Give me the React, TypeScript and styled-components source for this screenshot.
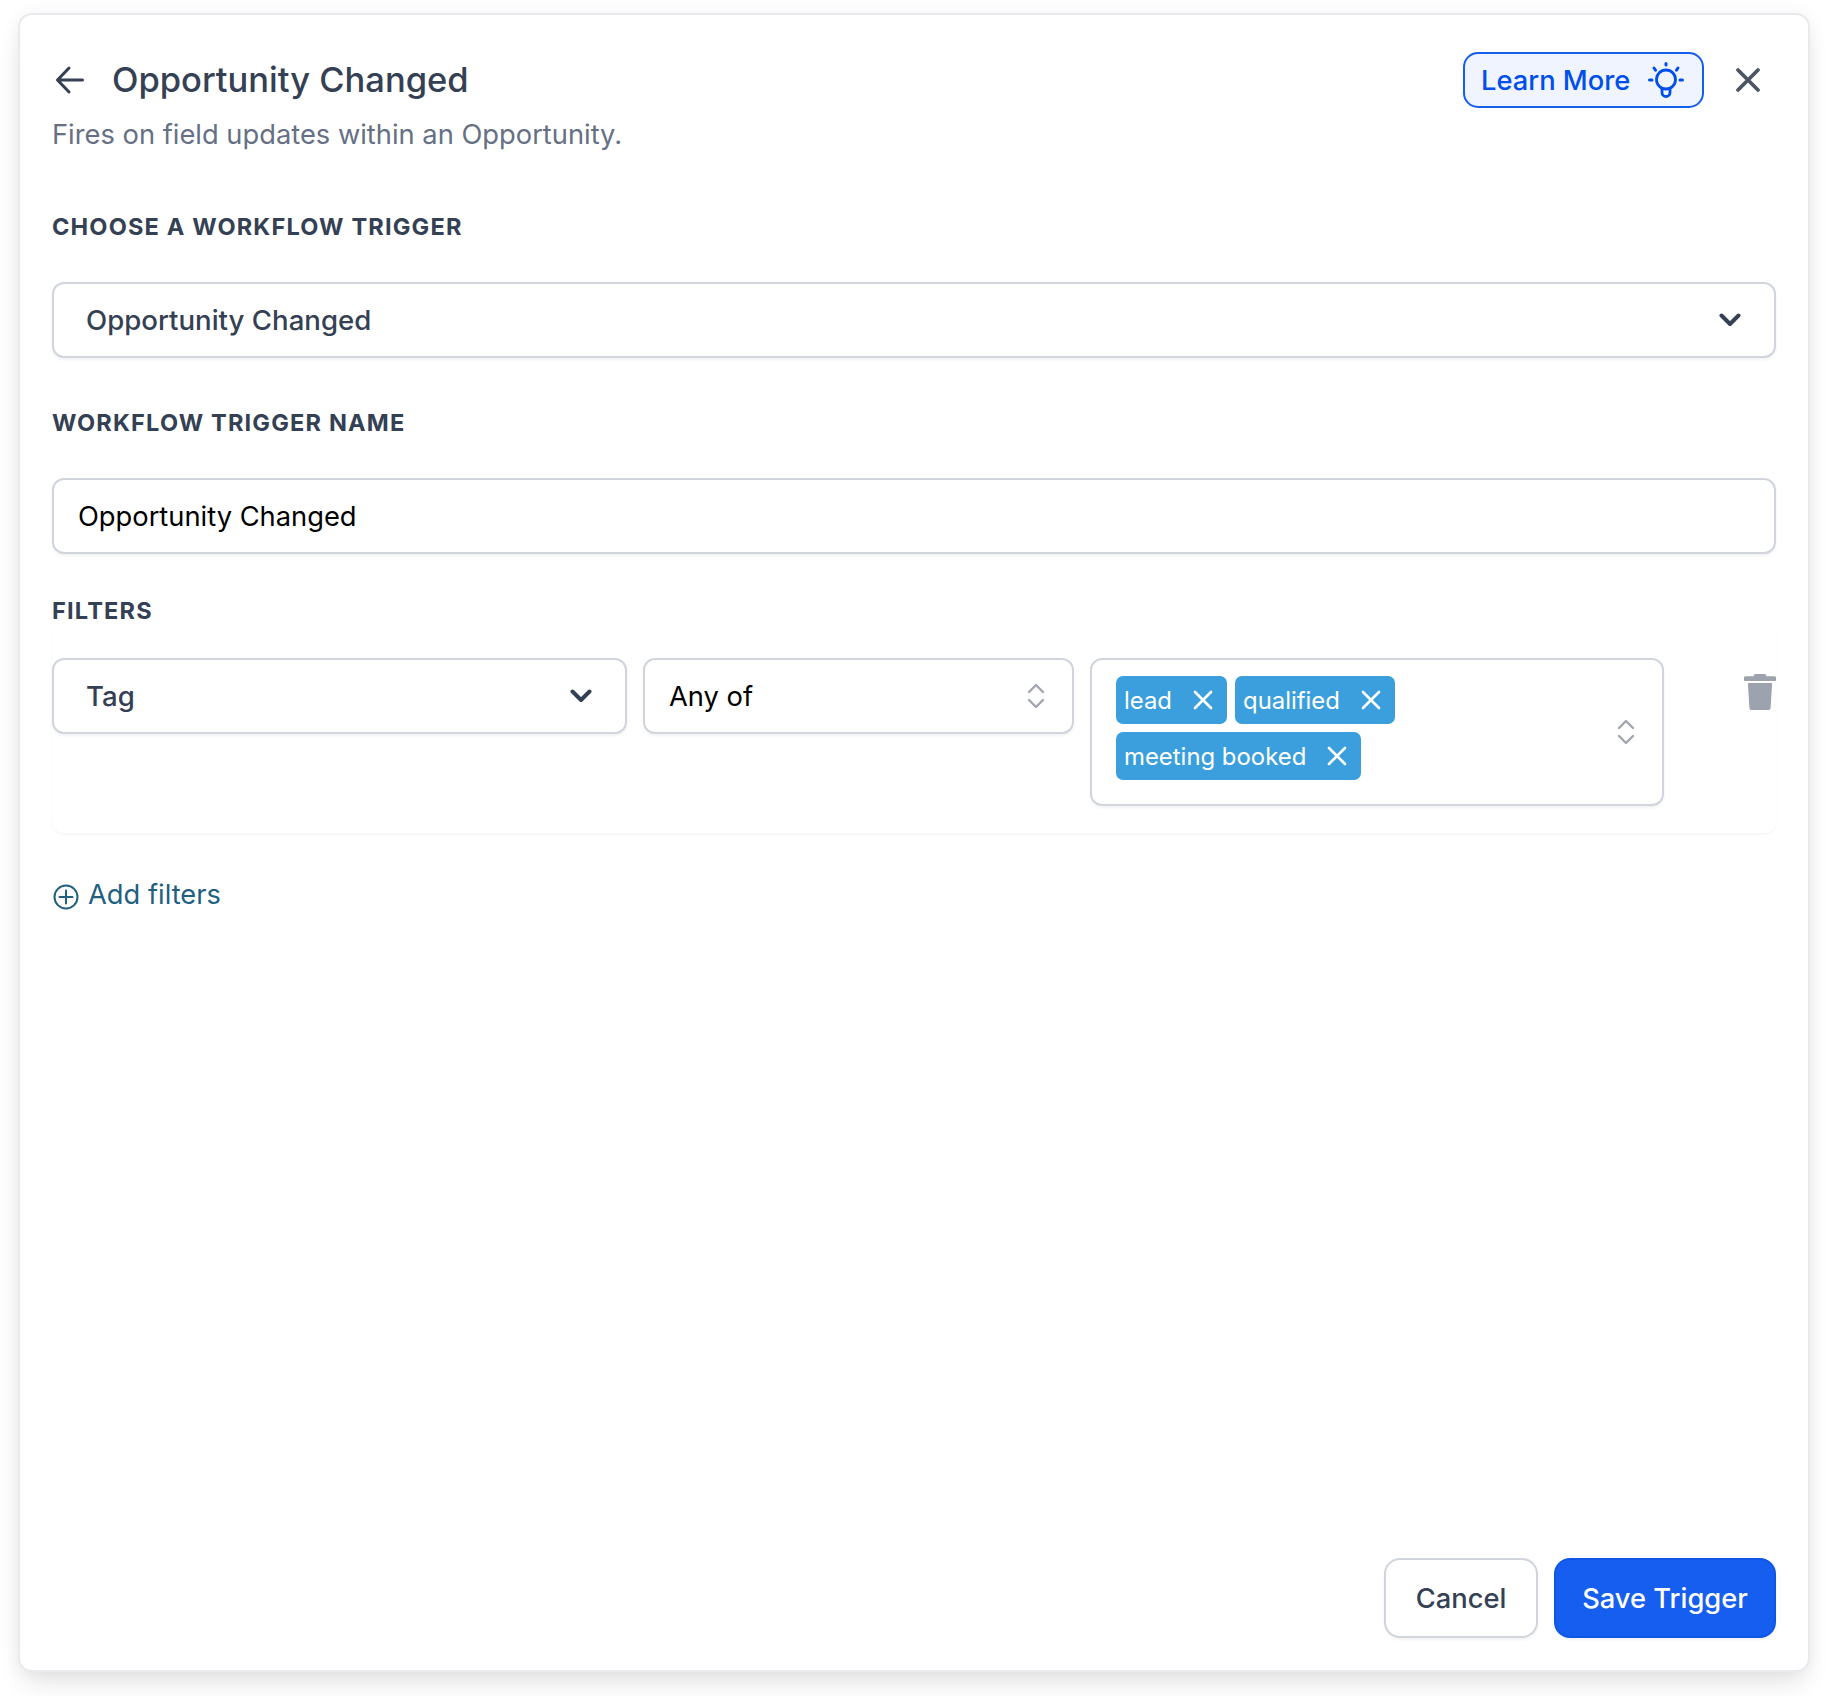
import React from 'react';
import styled, { createGlobalStyle } from 'styled-components';

const GlobalStyle = createGlobalStyle`
  html, body {
    margin: 0;
    padding: 0;
    background: #ffffff;
  }
  * {
    box-sizing: border-box;
  }
`;

const Page = styled.div`
  padding: 13px 0 0 18px;
  height: 1696px;
  font-family: Inter, 'Noto Sans', sans-serif;
  overflow: hidden;
`;

const Card = styled.div`
  width: 1792px;
  height: 1659px;
  border: 2px solid #e9eaed;
  border-radius: 14px;
  background: #ffffff;
  padding: 37px 32px 32px;
  display: flex;
  flex-direction: column;
  box-shadow: 0 16px 26px -5px rgba(0, 0, 0, 0.1), 0 0 18px rgba(0, 0, 0, 0.05);
`;

const Header = styled.div`
  display: flex;
  align-items: center;
  justify-content: space-between;
  height: 56px;
`;

const TitleGroup = styled.div`
  display: flex;
  align-items: center;
`;

const BackIcon = styled.svg`
  width: 30px;
  height: 30px;
  margin: 0 27px 0 3px;
  color: #344054;
`;

const Title = styled.h1`
  margin: 0;
  font-size: 34.5px;
  line-height: 44px;
  font-weight: 500;
  color: #344054;
`;

const Actions = styled.div`
  display: flex;
  align-items: center;
`;

const LearnMore = styled.button`
  display: flex;
  align-items: center;
  justify-content: space-between;
  width: 241px;
  height: 56px;
  padding: 0 18px 0 16px;
  border: 2px solid #155eef;
  border-radius: 15px;
  background: #eff4ff;
  color: #004eeb;
  font-family: inherit;
  font-size: 27.3px;
  font-weight: 500;
`;

const CloseIcon = styled.svg`
  width: 30px;
  height: 30px;
  margin: 0 13px 0 29px;
  color: #4b5563;
`;

const Subtitle = styled.p`
  margin: 7px 0 0;
  font-size: 27.3px;
  line-height: 40px;
  color: #667085;
`;

const Label = styled.div<{ $top: number; $bottom: number }>`
  margin: ${(p) => p.$top}px 0 ${(p) => p.$bottom}px;
  font-size: 23.55px;
  line-height: 30px;
  font-weight: 700;
  letter-spacing: 0.05em;
  color: #344054;
`;

const Field = styled.div<{ $left?: number; $right?: number; $plain?: boolean }>`
  display: flex;
  align-items: center;
  justify-content: space-between;
  height: 76px;
  padding: 0 ${(p) => p.$right ?? 33}px 0 ${(p) => p.$left ?? 32}px;
  border: 2px solid #d0d5dd;
  border-radius: 12px;
  background: #ffffff;
  font-size: ${(p) => (p.$plain ? 27.3 : 27.6)}px;
  font-weight: ${(p) => (p.$plain ? 400 : 500)};
  color: ${(p) => (p.$plain ? '#000000' : '#344054')};
  box-shadow: 0 2px 3px rgba(16, 24, 40, 0.05);
`;

const ChevronIcon = styled.svg`
  width: 22px;
  height: 14px;
  color: #344054;
  flex: none;
`;

const UpDownIcon = styled.svg`
  width: 18px;
  height: 28px;
  color: #a0a5b0;
  flex: none;
`;

const FilterPanel = styled.div`
  padding: 32px 0 27px;
  border-radius: 12px;
  box-shadow: 0 2px 3px rgba(16, 24, 40, 0.04);
`;

const FilterRow = styled.div`
  display: grid;
  grid-template-columns: 575px 431px 574px 1fr;
  column-gap: 16px;
  align-items: start;
`;

const TagsBox = styled.div`
  display: flex;
  align-items: center;
  justify-content: space-between;
  height: 148px;
  padding: 0 27px 0 24px;
  border: 2px solid #d0d5dd;
  border-radius: 12px;
  box-shadow: 0 2px 3px rgba(16, 24, 40, 0.05);
`;

const TagList = styled.div`
  align-self: flex-start;
  display: flex;
  flex-wrap: wrap;
  gap: 8px;
  width: 330px;
  margin-top: 16px;
`;

const TagChip = styled.span`
  display: inline-flex;
  align-items: center;
  height: 48px;
  padding: 0 14px 0 8px;
  border-radius: 7px;
  background: #3b9fdd;
  color: #ffffff;
  font-size: 23.9px;
`;

const TagX = styled.svg`
  width: 20px;
  height: 20px;
  margin-left: 21px;
`;

const TrashIcon = styled.svg`
  justify-self: end;
  width: 32px;
  height: 36px;
  margin-top: 16px;
  color: #9ca3af;
`;

const AddFilters = styled.div`
  display: flex;
  align-items: center;
  gap: 9px;
  margin-top: 44px;
  padding-left: 1px;
  font-size: 27.3px;
  line-height: 36px;
  color: #1f5f7f;
`;

const PlusIcon = styled.svg`
  width: 26px;
  height: 26px;
  margin-top: 4px;
`;

const Footer = styled.div`
  display: flex;
  justify-content: flex-end;
  gap: 16px;
  margin-top: auto;
`;

const FooterButton = styled.button<{ $primary?: boolean }>`
  height: 80px;
  width: ${(p) => (p.$primary ? 222 : 154)}px;
  border: 2px solid ${(p) => (p.$primary ? '#0f56e6' : '#d0d5dd')};
  border-radius: 16px;
  background: ${(p) => (p.$primary ? '#155eef' : '#ffffff')};
  color: ${(p) => (p.$primary ? '#ffffff' : '#344054')};
  font-family: inherit;
  font-size: 27.3px;
  font-weight: 500;
  box-shadow: 0 2px 3px rgba(16, 24, 40, 0.05);
`;

const Chevron = () => (
  <ChevronIcon viewBox="0 0 22 14" fill="none">
    <path d="M2.5 2.5 11 11l8.5-8.5" stroke="currentColor" strokeWidth="4" strokeLinecap="round" strokeLinejoin="round" />
  </ChevronIcon>
);

const UpDown = () => (
  <UpDownIcon viewBox="0 0 18 28" fill="none">
    <path d="M2 10 9 3l7 7M2 18l7 7 7-7" stroke="currentColor" strokeWidth="2.4" strokeLinecap="round" strokeLinejoin="round" />
  </UpDownIcon>
);

const Tag = ({ label }: { label: string }) => (
  <TagChip>
    {label}
    <TagX viewBox="0 0 20 20" fill="none">
      <path d="M2 2l16 16M18 2 2 18" stroke="currentColor" strokeWidth="2.6" strokeLinecap="round" />
    </TagX>
  </TagChip>
);

export default function App() {
  return (
    <>
      <GlobalStyle />
      <Page>
        <Card>
          <Header>
            <TitleGroup>
              <BackIcon viewBox="0 0 30 30" fill="none">
                <path d="M27.5 15H3M14 3 2.5 15 14 27" stroke="currentColor" strokeWidth="3" strokeLinecap="round" strokeLinejoin="round" />
              </BackIcon>
              <Title>Opportunity Changed</Title>
            </TitleGroup>
            <Actions>
              <LearnMore>
                Learn More
                <svg width="36" height="36" viewBox="0 0 36 36" fill="none">
                  <circle cx="18" cy="17.5" r="9.5" stroke="currentColor" strokeWidth="2.8" />
                  <path d="M14 27v3.5a4 4 0 0 0 8 0V27" stroke="currentColor" strokeWidth="2.8" />
                  <path d="M18 1.5v1.5M6 6l1.5 2.2M30 6l-1.5 2.2M1.5 18H4M32 18h2.5" stroke="currentColor" strokeWidth="3" strokeLinecap="round" />
                </svg>
              </LearnMore>
              <CloseIcon viewBox="0 0 30 30" fill="none">
                <path d="M5 5l20 20M25 5 5 25" stroke="currentColor" strokeWidth="3.8" strokeLinecap="round" />
              </CloseIcon>
            </Actions>
          </Header>
          <Subtitle>Fires on field updates within an Opportunity.</Subtitle>

          <Label $top={57} $bottom={40}>CHOOSE A WORKFLOW TRIGGER</Label>
          <Field>
            Opportunity Changed
            <Chevron />
          </Field>

          <Label $top={50} $bottom={40}>WORKFLOW TRIGGER NAME</Label>
          <Field $left={24} $plain>Opportunity Changed</Field>

          <Label $top={42} $bottom={0}>FILTERS</Label>
          <FilterPanel>
            <FilterRow>
              <Field>
                Tag
                <Chevron />
              </Field>
              <Field $left={24} $right={27} $plain>
                Any of
                <UpDown />
              </Field>
              <TagsBox>
                <TagList>
                  <Tag label="lead" />
                  <Tag label="qualified" />
                  <Tag label="meeting booked" />
                </TagList>
                <UpDown />
              </TagsBox>
              <TrashIcon viewBox="0 0 33 38" fill="currentColor" preserveAspectRatio="none">
                <path d="M12 0h9a2 2 0 0 1 2 2.5h8a2 2 0 0 1 0 5H2a2 2 0 0 1 0-5h8A2 2 0 0 1 12 0Z" />
                <path d="M4 9.5h25L27.5 35a3 3 0 0 1-3 3h-16a3 3 0 0 1-3-3L4 9.5Z" />
              </TrashIcon>
            </FilterRow>
          </FilterPanel>

          <AddFilters>
            <PlusIcon viewBox="0 0 26 26" fill="none">
              <circle cx="13" cy="13" r="11.5" stroke="currentColor" strokeWidth="2" />
              <path d="M13 6.5v13M6.5 13h13" stroke="currentColor" strokeWidth="2" strokeLinecap="round" />
            </PlusIcon>
            Add filters
          </AddFilters>

          <Footer>
            <FooterButton>Cancel</FooterButton>
            <FooterButton $primary>Save Trigger</FooterButton>
          </Footer>
        </Card>
      </Page>
    </>
  );
}
